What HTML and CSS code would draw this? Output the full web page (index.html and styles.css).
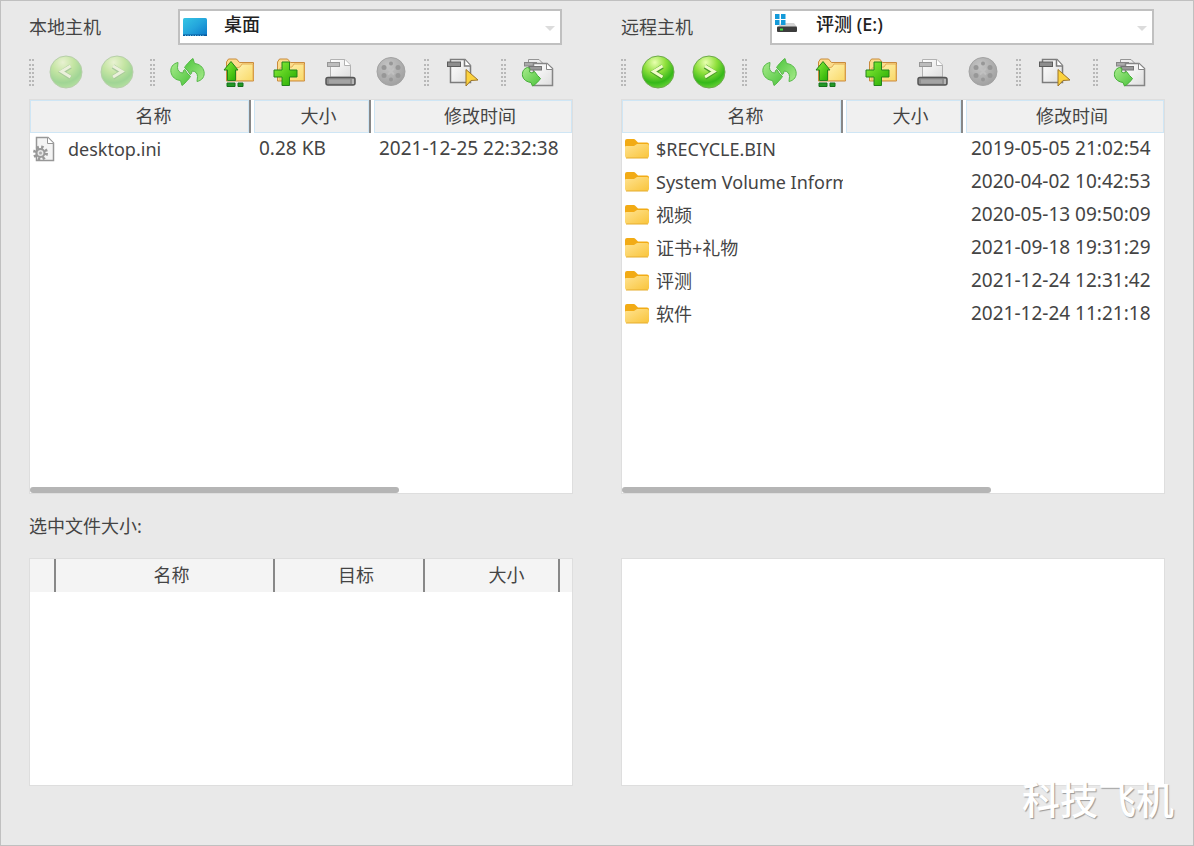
FILE: index.html
```
<!DOCTYPE html>
<html lang="zh-CN">
<head>
    <meta charset="UTF-8">
    <meta name="viewport" content="width=device-width, initial-scale=1.0">
    <title>文件传输</title>
    <link rel="stylesheet" href="styles.css">
</head>
<body>
    <!-- Icon sprite -->
    <svg class="sprite" aria-hidden="true">
        <defs>
            <radialGradient id="ball" cx="0.4" cy="0.2" r="0.85">
                <stop offset="0" stop-color="#e9ffb0"/>
                <stop offset="0.4" stop-color="#8fe03c"/>
                <stop offset="0.75" stop-color="#35b81a"/>
                <stop offset="1" stop-color="#6fd83a"/>
            </radialGradient>
            <linearGradient id="green" x1="0" y1="0" x2="1" y2="1">
                <stop offset="0" stop-color="#a8eb8c"/>
                <stop offset="1" stop-color="#4cc43c"/>
            </linearGradient>
            <linearGradient id="arrow" x1="0" y1="0" x2="1" y2="1">
                <stop offset="0" stop-color="#8cf03a"/>
                <stop offset="1" stop-color="#22a800"/>
            </linearGradient>
            <linearGradient id="yellow" x1="0" y1="0" x2="1" y2="1">
                <stop offset="0" stop-color="#fff3b4"/>
                <stop offset="1" stop-color="#f9d968"/>
            </linearGradient>
            <linearGradient id="folder" x1="0" y1="0" x2="1" y2="1">
                <stop offset="0" stop-color="#ffe391"/>
                <stop offset="1" stop-color="#f9c43a"/>
            </linearGradient>
            <linearGradient id="paper" x1="0" y1="0" x2="1" y2="1">
                <stop offset="0" stop-color="#ffffff"/>
                <stop offset="1" stop-color="#dedede"/>
            </linearGradient>
            <linearGradient id="screen" x1="0" y1="0" x2="1" y2="1">
                <stop offset="0" stop-color="#35c5e4"/>
                <stop offset="0.5" stop-color="#24a5dc"/>
                <stop offset="1" stop-color="#0b78c8"/>
            </linearGradient>
            <radialGradient id="grayball" cx="0.4" cy="0.3" r="0.7">
                <stop offset="0" stop-color="#c4c4c4"/>
                <stop offset="1" stop-color="#a2a2a2"/>
            </radialGradient>
        </defs>

        <symbol id="i-back" viewBox="0 0 36 36">
            <circle cx="18" cy="18" r="16" fill="url(#ball)" stroke="#6da94c"/>
            <path d="M22.500 12.500 14 18l8.500 5.500" fill="none" stroke="#4a9c2a" stroke-width="4.500"/>
            <path d="M22.500 12 13.500 17.500l9 5.500" fill="none" stroke="#f0fbc8" stroke-width="3"/>
        </symbol>
        <symbol id="i-forward" viewBox="0 0 36 36">
            <circle cx="18" cy="18" r="16" fill="url(#ball)" stroke="#6da94c"/>
            <path d="M14 12.500 22.500 18 14 23.500" fill="none" stroke="#4a9c2a" stroke-width="4.500"/>
            <path d="M14 12l9 5.500-9 5.500" fill="none" stroke="#f0fbc8" stroke-width="3"/>
        </symbol>
        <symbol id="i-refresh" viewBox="0 0 36 36">
            <g fill="url(#green)" stroke="#58b94a" stroke-linejoin="round">
                <path id="swoop" d="M9 8.500C4 9.500 1 13.500 2 18.500 3 23 6.500 26 11.500 26.500L13 31.500C15 30.500 19.500 25.500 21.500 22.500L18 19 16 15.500 14.500 16.500 14 19C10.500 19 8.500 16.500 8.500 13.500Z"/>
                <use href="#swoop" transform="rotate(180 18.500 18)"/>
            </g>
        </symbol>
        <symbol id="i-up" viewBox="0 0 36 36">
            <path d="M6.500 27V8l2-3h8l3 3.500h14V27Z" fill="#fbdc8c" stroke="#c98b3c" stroke-linejoin="round"/>
            <path d="M16 26.500V14l4-1 2-3h11v16.500Z" fill="url(#yellow)" stroke="#e3ad55"/>
            <path d="M11 7.500 4 16h3.500v10.500h8V16H18Z" fill="url(#arrow)" stroke="#23831b" stroke-linejoin="round"/>
            <path d="M7 29h8v3.500H7ZM18 29h5v3.500h-5Z" fill="#229a26" stroke="#14701a"/>
        </symbol>
        <symbol id="i-new" viewBox="0 0 36 36">
            <path d="M6.500 27V8l2-3h8l3 3.500h14V27Z" fill="#fbdc8c" stroke="#c98b3c" stroke-linejoin="round"/>
            <path d="M9 26.500V14l12-1 2-3h10v16.500Z" fill="url(#yellow)" stroke="#e3ad55"/>
            <path d="M11 8h7.500v8H26v7h-7.500v8.500H11V23H3v-7h8Z" fill="url(#arrow)" stroke="#23831b" stroke-linejoin="round"/>
        </symbol>
        <symbol id="i-delete" viewBox="0 0 36 36">
            <path d="M8.500 23V5.500H23l5.500 5.500v12Z" fill="url(#paper)" stroke="#b2b2b2"/>
            <path d="M22.500 5.500V11.500h6" fill="#fff" stroke="#b2b2b2"/>
            <rect x="5.500" y="8.500" width="12" height="4" fill="#bdbdbd" stroke="#979797"/>
            <rect x="4" y="23.500" width="29" height="7.500" rx="2" fill="#8f8f8f" stroke="#555" stroke-width="1.500"/>
            <rect x="7" y="25.500" width="21" height="4" fill="#a4a4a4"/>
            <path d="M31 25v5" stroke="#ddd"/>
        </symbol>
        <symbol id="i-stop" viewBox="0 0 36 36">
            <circle cx="18" cy="17.500" r="14" fill="url(#grayball)" stroke="#a3a3a3"/>
            <g fill="#979797">
                <circle cx="18" cy="9.500" r="2"/>
                <circle cx="18" cy="25.500" r="2"/>
                <circle cx="11" cy="13.500" r="2.500"/>
                <circle cx="25" cy="13.500" r="2.500"/>
                <circle cx="11" cy="21.500" r="2.500"/>
                <circle cx="25" cy="21.500" r="2.500"/>
            </g>
            <path d="m15 14.500 6 6m0-6-6 6" stroke="#c0c0c0" stroke-width="2"/>
        </symbol>
        <symbol id="i-select" viewBox="0 0 36 36">
            <path d="M4.500 28.500V5.500H19l5.500 6v17Z" fill="url(#paper)" stroke="#7c7c7c" stroke-width="1.500"/>
            <path d="M18.500 5.500V12h6" fill="#fff" stroke="#7c7c7c" stroke-width="1.500"/>
            <rect x="1.500" y="8" width="13" height="4.500" fill="#8e8e8e" stroke="#5c5c5c"/>
            <path d="M20 15.500V32l5-5.500 7-.5Z" fill="#fbd23e" stroke="#9c7428" stroke-linejoin="round"/>
        </symbol>
        <symbol id="i-copy" viewBox="0 0 36 36">
            <path d="M8.500 24V5.500H19l4 4V24Z" fill="#eee" stroke="#959595"/>
            <rect x="4.500" y="8.500" width="12" height="3.500" fill="#aaa" stroke="#858585"/>
            <path d="M13.500 31.500V9.500H27l5.500 5v17Z" fill="url(#paper)" stroke="#858585" stroke-width="1.500"/>
            <path d="M26.500 9.500v6h6" fill="#fff" stroke="#858585"/>
            <rect x="9.500" y="12.500" width="12" height="3.500" fill="#999" stroke="#757575"/>
            <path d="M7.500 13.500C3.500 14.500 2 18 2.500 22 3.500 26 7 28 11 28.500L12.500 32C15 31 19 27 20.500 24.500L17.500 21.500 14.500 17.500 12 19 9.500 18 10 14.500Z" fill="url(#green)" stroke="#46ad38" stroke-linejoin="round"/>
        </symbol>
        <symbol id="i-folder" viewBox="0 0 26 22">
            <path d="M1 10V3q0-2 2-2h7q1 0 2 1.500l2 2h9q2 0 2 2v4Z" fill="#f2ab15"/>
            <path d="M1 9q0-1 1-1h8l3-2h10q2 0 2 2v10q0 2-2 2H3q-2 0-2-2Z" fill="url(#folder)"/>
            <path d="M2 20h22" stroke="#e6ad2e"/>
        </symbol>
        <symbol id="i-ini" viewBox="0 0 24 26">
            <path d="M4.500 24.500v-23H16l5.500 5.500v17.500Z" fill="#f4f4f4" stroke="#979797" stroke-width="1.500"/>
            <path d="M15.500 1.500V7.500h6" fill="#fff" stroke="#979797"/>
            <circle cx="8.500" cy="17" r="6" fill="none" stroke="#999" stroke-width="3" stroke-dasharray="2.400 2.300"/>
            <circle cx="8.500" cy="17" r="4" fill="#e5e5e5" stroke="#999" stroke-width="2"/>
            <circle cx="8.500" cy="17" r="1.500" fill="#aaa"/>
        </symbol>
        <symbol id="i-desktop" viewBox="0 0 26 26">
            <rect x="1" y="4" width="24" height="18" rx="1.500" fill="url(#screen)"/>
            <path d="M1 20.500h24v1.500H1Z" fill="#08589c"/>
            <path d="M3 21.500h20" stroke="#62c3ec" stroke-dasharray="1 1.500"/>
        </symbol>
        <symbol id="i-drive" viewBox="0 0 26 26">
            <path d="m4 13 3-4h13l3 4Z" fill="#d4d4d4"/>
            <rect x="3" y="12.500" width="20" height="5.500" rx="1" fill="#3c3c3c"/>
            <path d="M6 15.500h3" stroke="#41d943" stroke-width="2"/>
            <path d="M1 0h4.500v5H1ZM7 0h4.500v5H7ZM1 6h4.500v5H1ZM7 6h4.500v5H7Z" fill="#149ad9"/>
        </symbol>
    </svg>

    <main class="window">
        <section class="host">
            <div class="host-row">
                <label for="localPath">本地主机</label>
                <div class="path">
                    <svg class="path-icon"><use href="#i-desktop"/></svg>
                    <select id="localPath">
                        <option>桌面</option>
                    </select>
                </div>
            </div>
            <div class="toolbar">
                <span class="handle"></span>
                <button type="button" aria-label="后退" disabled><svg><use href="#i-back"/></svg></button>
                <button type="button" aria-label="前进" disabled><svg><use href="#i-forward"/></svg></button>
                <span class="handle"></span>
                <button type="button" aria-label="刷新"><svg><use href="#i-refresh"/></svg></button>
                <button type="button" aria-label="上一级"><svg><use href="#i-up"/></svg></button>
                <button type="button" aria-label="新建文件夹"><svg><use href="#i-new"/></svg></button>
                <button type="button" aria-label="删除"><svg><use href="#i-delete"/></svg></button>
                <button type="button" aria-label="停止"><svg><use href="#i-stop"/></svg></button>
                <span class="handle"></span>
                <button type="button" class="wide" aria-label="选择"><svg><use href="#i-select"/></svg></button>
                <span class="handle"></span>
                <button type="button" aria-label="传输"><svg><use href="#i-copy"/></svg></button>
            </div>
            <div class="panel file-list">
                <table class="files">
                    <colgroup><col class="col-name"><col class="col-size"><col></colgroup>
                    <thead>
                        <tr>
                            <th><div class="head head-name">名称</div></th>
                            <th><div class="head">大小</div></th>
                            <th><div class="head">修改时间</div></th>
                        </tr>
                    </thead>
                    <tbody>
                        <tr>
                            <td><div class="name"><svg class="ini-icon"><use href="#i-ini"/></svg><span>desktop.ini</span></div></td>
                            <td>0.28 KB</td>
                            <td>2021-12-25 22:32:38</td>
                        </tr>
                    </tbody>
                </table>
                <div class="scroll-thumb"></div>
            </div>
        </section>

        <section class="host">
            <div class="host-row">
                <label for="remotePath">远程主机</label>
                <div class="path">
                    <svg class="path-icon"><use href="#i-drive"/></svg>
                    <select id="remotePath">
                        <option>评测 (E:)</option>
                    </select>
                </div>
            </div>
            <div class="toolbar">
                <span class="handle"></span>
                <button type="button" aria-label="后退"><svg><use href="#i-back"/></svg></button>
                <button type="button" aria-label="前进"><svg><use href="#i-forward"/></svg></button>
                <span class="handle"></span>
                <button type="button" aria-label="刷新"><svg><use href="#i-refresh"/></svg></button>
                <button type="button" aria-label="上一级"><svg><use href="#i-up"/></svg></button>
                <button type="button" aria-label="新建文件夹"><svg><use href="#i-new"/></svg></button>
                <button type="button" aria-label="删除"><svg><use href="#i-delete"/></svg></button>
                <button type="button" aria-label="停止"><svg><use href="#i-stop"/></svg></button>
                <span class="handle"></span>
                <button type="button" class="wide" aria-label="选择"><svg><use href="#i-select"/></svg></button>
                <span class="handle"></span>
                <button type="button" aria-label="传输"><svg><use href="#i-copy"/></svg></button>
            </div>
            <div class="panel file-list">
                <table class="files">
                    <colgroup><col class="col-name"><col class="col-size"><col></colgroup>
                    <thead>
                        <tr>
                            <th><div class="head head-name">名称</div></th>
                            <th><div class="head">大小</div></th>
                            <th><div class="head">修改时间</div></th>
                        </tr>
                    </thead>
                    <tbody>
                        <tr>
                            <td><div class="name"><svg class="folder-icon"><use href="#i-folder"/></svg><span>$RECYCLE.BIN</span></div></td>
                            <td></td>
                            <td>2019-05-05 21:02:54</td>
                        </tr>
                        <tr>
                            <td><div class="name"><svg class="folder-icon"><use href="#i-folder"/></svg><span>System Volume Information</span></div></td>
                            <td></td>
                            <td>2020-04-02 10:42:53</td>
                        </tr>
                        <tr>
                            <td><div class="name"><svg class="folder-icon"><use href="#i-folder"/></svg><span>视频</span></div></td>
                            <td></td>
                            <td>2020-05-13 09:50:09</td>
                        </tr>
                        <tr>
                            <td><div class="name"><svg class="folder-icon"><use href="#i-folder"/></svg><span>证书+礼物</span></div></td>
                            <td></td>
                            <td>2021-09-18 19:31:29</td>
                        </tr>
                        <tr>
                            <td><div class="name"><svg class="folder-icon"><use href="#i-folder"/></svg><span>评测</span></div></td>
                            <td></td>
                            <td>2021-12-24 12:31:42</td>
                        </tr>
                        <tr>
                            <td><div class="name"><svg class="folder-icon"><use href="#i-folder"/></svg><span>软件</span></div></td>
                            <td></td>
                            <td>2021-12-24 11:21:18</td>
                        </tr>
                    </tbody>
                </table>
                <div class="scroll-thumb"></div>
            </div>
        </section>

        <p class="status">选中文件大小:</p>

        <div class="panel queue">
            <table class="jobs">
                <colgroup><col class="col-mark"><col class="col-job"><col class="col-target"><col class="col-total"><col></colgroup>
                <thead>
                    <tr>
                        <th></th>
                        <th>名称</th>
                        <th>目标</th>
                        <th class="total">大小</th>
                        <th></th>
                    </tr>
                </thead>
            </table>
        </div>
        <div class="panel queue"></div>

        <div class="watermark">科技飞机</div>
    </main>
</body>
</html>
```

FILE: styles.css
```
* {
    box-sizing: border-box;
}
body {
    margin: 0;
    font-family: "Noto Sans", "Noto Sans CJK SC", sans-serif;
    font-size: 18px;
    line-height: 24px;
    color: #444;
    background-color: #e9e9e9;
}
.sprite {
    position: absolute;
    width: 0;
    height: 0;
}
.window {
    position: relative;
    min-height: 100vh;
    padding: 8px 28px;
    border: 1px solid #c0c0c0;
    display: grid;
    grid-template-columns: minmax(0, 1fr) minmax(0, 1fr);
    column-gap: 48px;
    align-content: start;
}

/* Host selector */
.host-row {
    display: flex;
    align-items: center;
    padding-right: 11px;
}
.host-row label {
    width: 149px;
}
.path {
    position: relative;
    flex: 1;
}
.path-icon {
    position: absolute;
    left: 4px;
    top: 5px;
    width: 26px;
    height: 26px;
}
select {
    display: block;
    width: 100%;
    height: 36px;
    padding: 0 40px 6px 44px;
    border: 2px solid #c0c0c0;
    border-radius: 0;
    appearance: none;
    background-color: white;
    font-family: inherit;
    font-size: 18px;
    font-weight: 500;
    color: #222;
}
.path::after {
    content: "";
    position: absolute;
    right: 7px;
    top: 17px;
    border: 5px solid transparent;
    border-top-color: #dcdcdc;
    border-bottom: none;
}

/* Toolbar */
.toolbar {
    display: flex;
    align-items: center;
    height: 36px;
    margin: 9px 0;
}
.toolbar button {
    width: 51px;
    height: 36px;
    padding: 0;
    border: none;
    background: none;
    cursor: pointer;
}
.toolbar button.wide {
    width: 58px;
}
.toolbar button:disabled {
    opacity: 0.4;
    cursor: default;
}
.toolbar svg {
    display: block;
    width: 36px;
    height: 36px;
    margin: 0 auto;
}
.handle {
    width: 5px;
    height: 27px;
    margin: 0 6px 0 8px;
    border: dotted #b8b8b8;
    border-width: 0 2px;
}
.handle:first-child {
    margin-left: 0;
}

/* Lists */
.panel {
    background-color: white;
    border: 1px solid #dedede;
}
.file-list {
    display: flex;
    flex-direction: column;
    justify-content: space-between;
    min-height: 395px;
}
table {
    width: 100%;
    table-layout: fixed;
    border-collapse: separate;
    border-spacing: 0;
}
th {
    height: 33px;
    padding: 0;
    font-weight: normal;
    text-align: center;
    border-right: 2px solid #888;
}
th:last-child {
    border-right: none;
}
.col-name {
    width: 221px;
}
.col-size {
    width: 120px;
}
.files th {
    padding-left: 3px;
}
.files th:first-child {
    padding-left: 0;
}
.head {
    height: 33px;
    padding-left: 14px;
    line-height: 31px;
    border: 1px solid #cfe6f5;
    background-color: #f0f0f0;
}
.head-name {
    padding-left: 28px;
}
td {
    height: 33px;
    padding: 0 0 4px 8px;
    font-size: 19px;
    white-space: nowrap;
}
td:first-child {
    padding: 0 0 1px 2px;
}
.name {
    display: flex;
    align-items: center;
    overflow: hidden;
    font-size: 18px;
}
.folder-icon {
    flex: none;
    width: 26px;
    height: 22px;
    margin-right: 6px;
}
.ini-icon {
    flex: none;
    width: 24px;
    height: 26px;
    margin-right: 12px;
}
.scroll-thumb {
    width: 68%;
    height: 6px;
    border-radius: 3px;
    background-color: #b5b5b5;
}

/* Transfer queue */
.status {
    grid-column: 1 / -1;
    margin: 0;
    line-height: 64px;
}
.queue {
    min-height: 228px;
}
.col-mark {
    width: 26px;
}
.col-job {
    width: 219px;
}
.col-target {
    width: 150px;
}
.col-total {
    width: 135px;
}
.jobs th {
    padding-left: 14px;
    padding-bottom: 2px;
    background-color: #f4f4f4;
}
.jobs th:last-child {
    padding-left: 0;
}
.jobs th.total {
    padding-left: 30px;
}

.watermark {
    position: absolute;
    right: 19px;
    bottom: 26px;
    font-size: 38px;
    font-weight: 500;
    line-height: 40px;
    color: white;
    text-shadow: 1px 1px 1px #999;
}
```
